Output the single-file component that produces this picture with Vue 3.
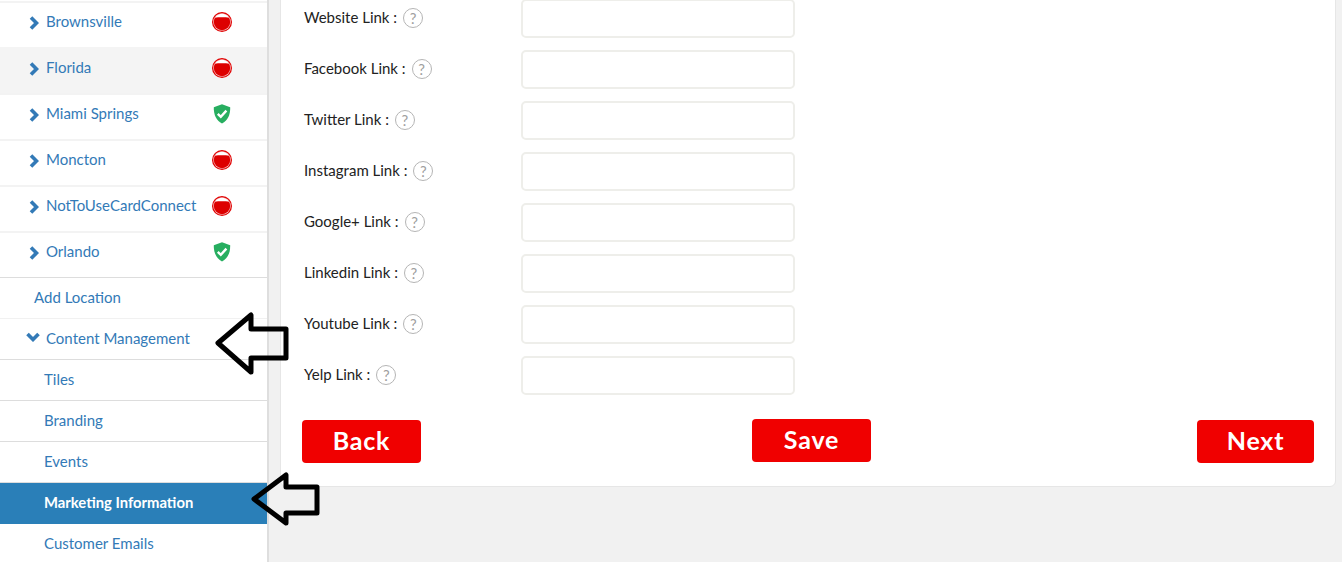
<script setup>
const locations = [
  { name: 'Brownsville', ok: false },
  { name: 'Florida', ok: false, hover: true },
  { name: 'Miami Springs', ok: true },
  { name: 'Moncton', ok: false },
  { name: 'NotToUseCardConnect', ok: false },
  { name: 'Orlando', ok: true },
]
const subs = [
  { name: 'Tiles' },
  { name: 'Branding' },
  { name: 'Events' },
  { name: 'Marketing Information', active: true },
  { name: 'Customer Emails' },
]
const links = ['Website', 'Facebook', 'Twitter', 'Instagram', 'Google+', 'Linkedin', 'Youtube', 'Yelp']
</script>

<template>
  <div class="page">
    <aside class="sidebar">
      <ul class="locations">
        <li v-for="l in locations" :key="l.name" class="loc" :class="{ hover: l.hover }">
          <svg class="chev" viewBox="0 0 10 14" width="10" height="14"><path d="M2 1.500 7.500 7 2 12.500" fill="none" stroke="currentColor" stroke-width="3.600" /></svg>
          <a class="name">{{ l.name }}</a>
          <svg v-if="l.ok" class="status" viewBox="0 0 20 22" width="20" height="22">
            <path d="M10 1.200 18.200 4.200c.2 7.600-2.400 13-8.200 16.400C4.200 17.200 1.600 11.800 1.800 4.200Z" fill="#27ae60" />
            <path d="M5.800 10.800 8.800 13.800 14.400 7.600" fill="none" stroke="#fff" stroke-width="2.400" />
          </svg>
          <svg v-else class="status" viewBox="0 0 20 20" width="20" height="20">
            <circle cx="10" cy="10" r="10" fill="#e00000" />
            <circle cx="10" cy="10" r="8.800" fill="#f7c8c8" />
            <circle cx="10" cy="10" r="8.200" fill="#dd0000" />
            <path d="M3 5.800C4.200 3.200 7 1.800 10 1.800s5.800 1.400 7 4C14 5.200 6 5.200 3 5.800Z" fill="#fff" />
          </svg>
        </li>
      </ul>
      <a class="add">Add Location</a>
      <div class="group">
        <svg class="chev-down" viewBox="0 0 14 10" width="14" height="10"><path d="M1.500 2 7 7.500 12.500 2" fill="none" stroke="currentColor" stroke-width="3.600" /></svg>
        <a>Content Management</a>
      </div>
      <ul class="subs">
        <li v-for="s in subs" :key="s.name" class="sub" :class="{ active: s.active }">{{ s.name }}</li>
      </ul>
    </aside>

    <main class="main">
      <section class="card">
        <div v-for="name in links" :key="name" class="row">
          <div class="label">
            <span class="label-text">{{ name }} Link :</span>
            <span class="help">?</span>
          </div>
          <input class="field" type="text" />
        </div>
        <div class="actions">
          <button class="btn">Back</button>
          <button class="btn save">Save</button>
          <button class="btn next">Next</button>
        </div>
      </section>
    </main>

    <svg class="arrow arrow-one" width="76" height="64" viewBox="0 0 76 64">
      <path d="M3 31 36 3V17H71V46H36V60Z" fill="none" stroke="#000" stroke-width="5" stroke-linejoin="round" />
    </svg>
    <svg class="arrow arrow-two" width="70" height="54" viewBox="0 0 70 54">
      <path d="M3 27 35 3V15H66V41H35V51Z" fill="none" stroke="#000" stroke-width="5" stroke-linejoin="round" />
    </svg>
  </div>
</template>

<style>
html, body { margin: 0; background: #f1f1f1; }
</style>

<style scoped>
.page {
  position: relative;
  display: flex;
  height: 562px;
  overflow: hidden;
  background: #f1f1f1;
  font-family: Lato, "Noto Sans", sans-serif;
  font-size: 15px;
}
ul { list-style: none; margin: 0; padding: 0; }
a { color: #337ab7; }

.sidebar {
  flex: none;
  box-sizing: content-box;
  width: 267px;
  border-right: 2px solid #dedede;
  background: #fff;
  color: #337ab7;
}
.locations { margin-top: 1px; border-bottom: 1px solid #ddd; }
.loc {
  display: flex;
  align-items: center;
  box-sizing: border-box;
  height: 46px;
  padding: 0 35px 8px 29px;
  border-top: 2px solid #f3f3f3;
}
.loc.hover { background: #f4f4f4; border-top-color: #f4f4f4; }
.chev { flex: none; margin-top: 4px; }
.name { flex: 1; margin-left: 7px; white-space: nowrap; }
.status { flex: none; margin-top: 2px; }
.add {
  display: flex;
  align-items: center;
  box-sizing: content-box;
  height: 38px;
  padding: 0 0 2px 34px;
  border-bottom: 1px solid #f1f1f1;
}
.group {
  display: flex;
  align-items: center;
  height: 38px;
  padding: 0 0 2px 26px;
  border-bottom: 1px solid #ddd;
}
.chev-down { flex: none; margin: -3px 6px 0 0; }
.sub {
  display: flex;
  align-items: center;
  box-sizing: content-box;
  height: 38px;
  padding: 0 0 2px 44px;
  border-bottom: 1px solid #ddd;
}
.sub.active { background: #2a7fb8; color: #fff; font-weight: 700; font-size: 14.800px; border-bottom-color: #2a7fb8; }

.main { flex: 1; min-width: 0; padding: 0 6px 0 11px; }
.card {
  box-sizing: border-box;
  height: 497px;
  margin-top: -10px;
  padding: 8px 21px 0 21px;
  background: #fff;
  border: 1px solid #e6e6e6;
  border-radius: 6px;
  position: relative;
}
.row {
  display: grid;
  grid-template-columns: 217px 274px;
  align-items: center;
  height: 39px;
  margin-bottom: 12px;
  padding-left: 2px;
  color: #222;
}
.label { display: flex; align-items: center; gap: 6px; margin-top: -2px; }
.label-text { margin-top: -1px; }
.help {
  box-sizing: border-box;
  width: 20px;
  height: 20px;
  border: 1px solid #b5b5b5;
  border-radius: 50%;
  color: #a0a0a0;
  font-size: 15px;
  line-height: 18px;
  text-align: center;
}
.field {
  box-sizing: border-box;
  width: 274px;
  height: 39px;
  border: 2px solid #eeeeea;
  border-radius: 5px;
  background: #fff;
  outline: none;
}
.actions {
  display: flex;
  justify-content: space-between;
  align-items: flex-start;
  margin-top: 25px;
}
.btn {
  width: 119px;
  height: 43px;
  padding: 0 0 3px;
  border: 0;
  border-radius: 4px;
  background: #f00000;
  color: #fff;
  font-family: inherit;
  font-size: 25px;
  font-weight: 700;
  letter-spacing: 0.8px;
}
.save { margin: -1px 0 0 5px; }
.next { width: 117px; }
.arrow { position: absolute; pointer-events: none; }
.arrow-one { left: 215px; top: 312px; }
.arrow-two { left: 251px; top: 472px; }
</style>
